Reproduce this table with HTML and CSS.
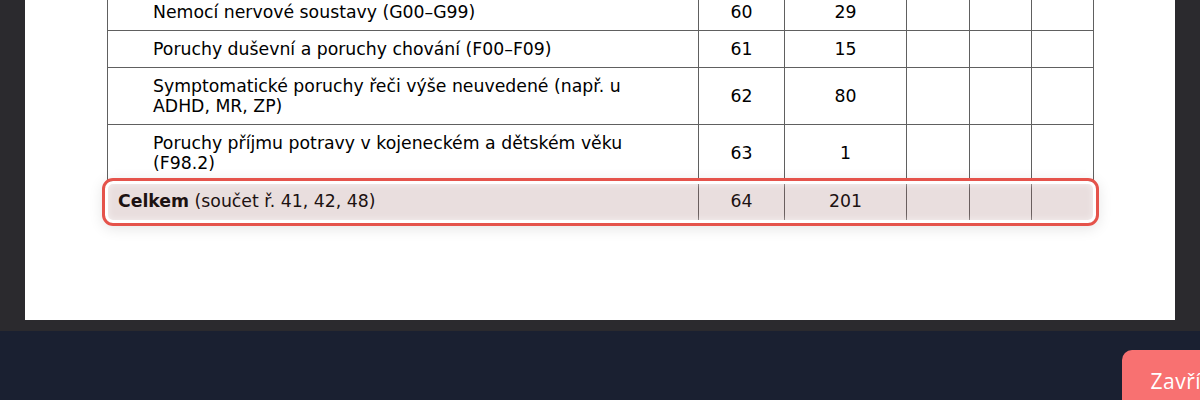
FILE: index.html
```html
<!DOCTYPE html>
<html lang="cs">
<head>
<meta charset="utf-8">
<link rel="stylesheet" href="styles.css">
</head>
<body>
<div class="viewer">
  <div class="page">
    <table class="report">
      <colgroup>
        <col class="c-name"><col class="c-row"><col class="c-val"><col class="c-e1"><col class="c-e2"><col class="c-e3">
      </colgroup>
      <tr><td class="name">Nemocí nervové soustavy (G00–G99)</td><td>60</td><td>29</td><td></td><td></td><td></td></tr>
      <tr><td class="name">Poruchy duševní a poruchy chování (F00–F09)</td><td>61</td><td>15</td><td></td><td></td><td></td></tr>
      <tr><td class="name">Symptomatické poruchy řeči výše neuvedené (např. u ADHD, MR, ZP)</td><td>62</td><td>80</td><td></td><td></td><td></td></tr>
      <tr><td class="name">Poruchy příjmu potravy v kojeneckém a dětském věku (F98.2)</td><td>63</td><td>1</td><td></td><td></td><td></td></tr>
      <tr class="total"><td class="name"><b>Celkem</b> (součet ř. 41, 42, 48)</td><td>64</td><td>201</td><td></td><td></td><td></td></tr>
    </table>
    <div class="highlight"></div>
  </div>
</div>
<div class="bar">
  <button class="close">Zavřít</button>
</div>
</body>
</html>
```

FILE: styles.css
```css
html, body {
  margin: 0;
  padding: 0;
}
body {
  width: 1200px;
  height: 400px;
  overflow: hidden;
  background: #2b2a2e;
}
.viewer {
  height: 331px;
  background: #2b2a2e;
  overflow: hidden;
}
.page {
  position: relative;
  margin-left: 25px;
  width: 1150px;
  height: 320px;
  background: #fff;
  overflow: hidden;
}
.report {
  margin-left: 82px;
  margin-top: -7px;
  border-collapse: collapse;
  font-family: "DejaVu Sans", sans-serif;
  font-size: 17.3px;
  line-height: 20px;
  color: #000;
  table-layout: fixed;
  width: 986px;
}
.c-name { width: 591px; }
.c-row { width: 86px; }
.c-val { width: 122px; }
.c-e1 { width: 63px; }
.c-e2 { width: 62px; }
.c-e3 { width: 62px; }
.report td {
  border: 1px solid #606060;
  padding: 8px 8px;
  text-align: center;
  vertical-align: middle;
}
.report td.name {
  text-align: left;
  padding-left: 45px;
  padding-right: 22px;
}
.report tr.total td {
  padding-top: 9px;
  padding-bottom: 9px;
}
.report tr.total td.name {
  padding-left: 10px;
}
.highlight {
  position: absolute;
  left: 77px;
  top: 178px;
  width: 991px;
  height: 42px;
  border: 3px solid #e5534b;
  border-radius: 11px;
  background: rgba(145, 90, 90, 0.2);
  box-shadow: inset 0 0 0 3px #fff, inset 0 0 7px 3px rgba(255, 255, 255, 0.55), 0 3px 14px rgba(0, 0, 0, 0.10);
  pointer-events: none;
}
.bar {
  height: 69px;
  background: #1a2031;
  display: flex;
  justify-content: flex-end;
  align-items: flex-start;
  padding-top: 19px;
  box-sizing: border-box;
  overflow: hidden;
}
.close {
  margin-right: -37px;
  height: 64px;
  padding: 0 28px 2px 28px;
  border: none;
  border-radius: 10px;
  background: #f87171;
  color: #fff;
  font-family: "Open Sans", sans-serif;
  font-weight: 500;
  font-size: 21px;
  letter-spacing: 0.5px;
}
```
